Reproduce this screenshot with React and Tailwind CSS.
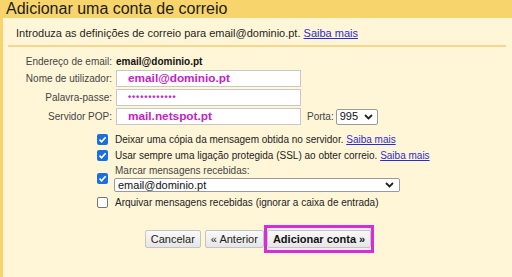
import React from "react";

function Chevron() {
  return (
    <svg width="9" height="6" viewBox="0 0 9 6" className="shrink-0">
      <path d="M1 1 L4.5 4.5 L8 1" fill="none" stroke="#222" strokeWidth="1.8" />
    </svg>
  );
}

function Box({ checked }) {
  if (checked) {
    return (
      <span className="w-[11px] h-[11px] rounded-[2px] bg-[#1a6fdc] flex items-center justify-center shrink-0">
        <svg width="9" height="9" viewBox="0 0 9 9">
          <path d="M1.5 4.7 L3.6 6.8 L7.6 2.2" fill="none" stroke="#fff" strokeWidth="1.7" />
        </svg>
      </span>
    );
  }
  return <span className="w-[11px] h-[11px] rounded-[2px] bg-white border border-[#777] shrink-0" />;
}

function Link({ children }) {
  return <span className="text-[#2b2bd0] underline">{children}</span>;
}

export default function App() {
  return (
    <div className="w-[512px] h-[277px] overflow-hidden bg-[#f8d46c] font-['Liberation_Sans',Arial,sans-serif] text-[#222]">
      <div className="h-[18px] pl-[6px] text-[16px] leading-[18px] text-[#1d1d1d]">
        Adicionar uma conta de correio
      </div>
      <div className="ml-[3px] h-[259px] bg-[#fff6d8] flex flex-col">
        <div className="pt-[8px] pl-[13px] text-[11px] leading-[14px] text-[#1f1f1f]">
          Introduza as definições de correio para email@dominio.pt. <Link>Saiba mais</Link>
        </div>
        <div className="mt-[5px] ml-[5px] mr-[6px] h-[2px] bg-[#f3d88e]" />

        <div className="mt-[7px] flex flex-col gap-[2px] text-[10px]">
          <div className="flex items-center h-[14px]">
            <span className="w-[109px] text-right text-[#444]">Endereço de email:</span>
            <span className="ml-[4px] font-bold text-[#111]">email@dominio.pt</span>
          </div>
          <div className="flex items-center h-[17px]">
            <span className="w-[109px] text-right text-[#444]">Nome de utilizador:</span>
            <div className="ml-[4px] w-[185px] h-[17px] bg-white border border-[#c8c8c8] pl-[11px] flex items-center text-[11.8px] font-bold text-[#c222c8]">
              email@dominio.pt
            </div>
          </div>
          <div className="flex items-center h-[17px]">
            <span className="w-[109px] text-right text-[#444]">Palavra-passe:</span>
            <div className="ml-[4px] w-[185px] h-[17px] bg-white border border-[#c8c8c8] pl-[11px] flex items-center text-[9px] font-bold text-[#c222c8] tracking-[0.9px]">
              ••••••••••••
            </div>
          </div>
          <div className="flex items-center h-[17px]">
            <span className="w-[109px] text-right text-[#444]">Servidor POP:</span>
            <div className="ml-[4px] w-[185px] h-[17px] bg-white border border-[#c8c8c8] pl-[11px] flex items-center text-[11.8px] font-bold text-[#c222c8]">
              mail.netspot.pt
            </div>
            <span className="ml-[6px] text-[#444]">Porta:</span>
            <div className="ml-[2px] w-[42px] h-[16px] bg-white border border-[#9a9a9a] rounded-[2px] pl-[3px] pr-[4px] flex items-center justify-between text-[11px] text-[#111]">
              <span>995</span>
              <Chevron />
            </div>
          </div>
        </div>

        <div className="mt-[6px] flex flex-col text-[10px] text-[#222]">
          <div className="flex items-center h-[16px]">
            <span className="w-[94px]" />
            <Box checked />
            <span className="ml-[7px]">
              Deixar uma cópia da mensagem obtida no servidor. <Link>Saiba mais</Link>
            </span>
          </div>
          <div className="flex items-center h-[16px]">
            <span className="w-[94px]" />
            <Box checked />
            <span className="ml-[7px]">
              Usar sempre uma ligação protegida (SSL) ao obter correio. <Link>Saiba mais</Link>
            </span>
          </div>
          <div className="flex items-center mt-[2px]">
            <span className="w-[94px]" />
            <Box checked />
            <div className="ml-[6px] flex flex-col">
              <span className="pl-[1px] leading-[12px] text-[#444]">Marcar mensagens recebidas:</span>
              <div className="mt-[1px] w-[286px] h-[14px] bg-white border border-[#9a9a9a] rounded-[2px] pl-[3px] pr-[5px] flex items-center justify-between text-[11px] text-[#111]">
                <span>email@dominio.pt</span>
                <Chevron />
              </div>
            </div>
          </div>
          <div className="flex items-center h-[16px] mt-[2px]">
            <span className="w-[94px]" />
            <Box />
            <span className="ml-[7px]">Arquivar mensagens recebidas (ignorar a caixa de entrada)</span>
          </div>
        </div>

        <div className="mt-[15px] flex items-center justify-center pl-[4px] text-[11px]">
          <button className="h-[18px] px-[5px] bg-gradient-to-b from-[#f9f9f9] to-[#e6e6e6] border border-[#c4c4c4] rounded-[2px] text-[#222]">
            Cancelar
          </button>
          <button className="ml-[4px] h-[18px] px-[5px] bg-gradient-to-b from-[#f9f9f9] to-[#e6e6e6] border border-[#c4c4c4] rounded-[2px] text-[#222]">
            « Anterior
          </button>
          <div className="border-[3px] border-[#d42fd4] py-[2px] px-0 bg-[#fbe9fb]">
            <button className="h-[18px] px-[5px] bg-gradient-to-b from-[#f9f9f9] to-[#e6e6e6] border border-[#c4c4c4] rounded-[2px] font-bold text-[#111]">
              Adicionar conta »
            </button>
          </div>
        </div>
      </div>
    </div>
  );
}
